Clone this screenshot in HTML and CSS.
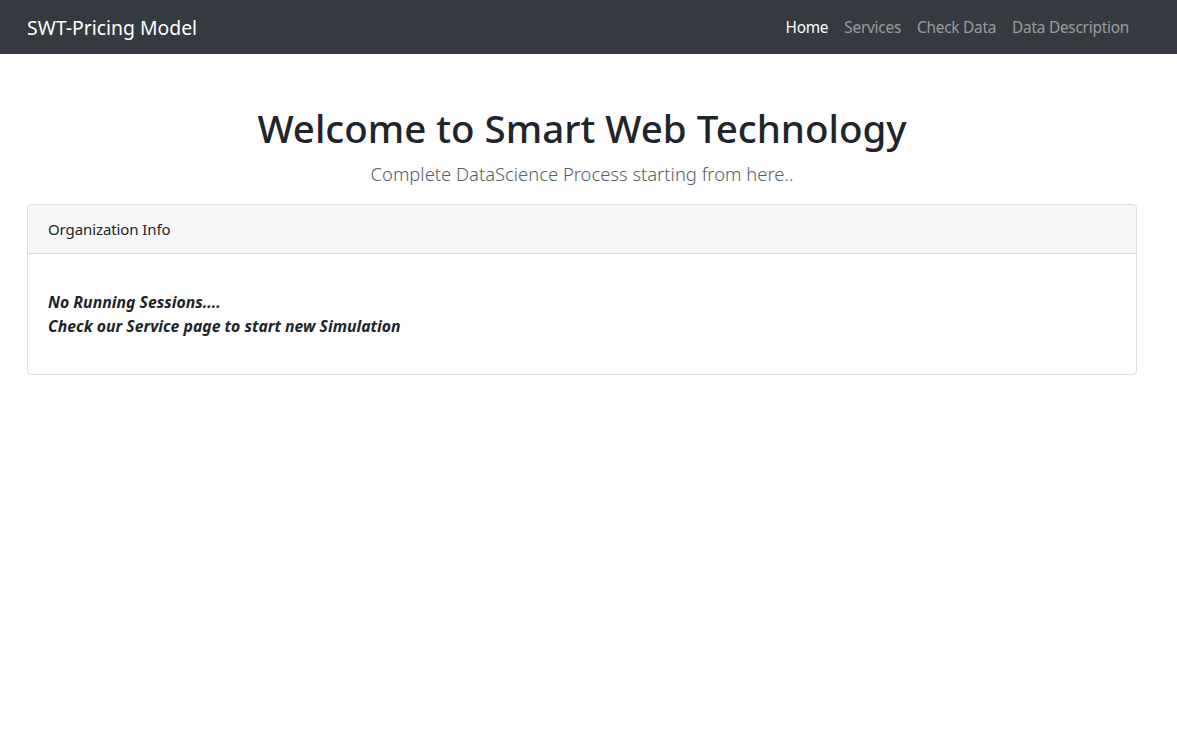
FILE: index.html
```html
<!DOCTYPE html>
<html lang="en">
<head>
<meta charset="utf-8">
<title>SWT-Pricing Model</title>
<link rel="stylesheet" href="styles.css">
</head>
<body>
<nav class="navbar">
  <a class="brand" href="#">SWT-Pricing Model</a>
  <ul class="nav">
    <li><a class="nav-link active" href="#">Home</a></li>
    <li><a class="nav-link" href="#">Services</a></li>
    <li><a class="nav-link" href="#">Check Data</a></li>
    <li><a class="nav-link" href="#">Data Description</a></li>
  </ul>
</nav>
<main class="content">
  <header class="hero">
    <h1 class="title">Welcome to Smart Web Technology</h1>
    <p class="lead">Complete DataScience Process starting from here..</p>
  </header>
  <section class="card">
    <div class="card-header">Organization Info</div>
    <div class="card-body">
      <p class="status">No Running Sessions....<br>Check our Service page to start new Simulation</p>
    </div>
  </section>
</main>
</body>
</html>
```
FILE: styles.css
```css
* { box-sizing: border-box; }
html, body { margin: 0; padding: 0; }
body {
  font-family: "Noto Sans", "Open Sans", "Liberation Sans", sans-serif;
  font-size: 16px;
  line-height: 1.5;
  color: #212529;
  background: #fff;
}
.navbar {
  height: 54px;
  background: #343a40;
  display: flex;
  align-items: center;
  justify-content: space-between;
  padding: 1px 40px 0 27px;
}
.brand {
  color: #fff;
  font-size: 19.4px;
  text-decoration: none;
  line-height: 30px;
}
.nav {
  list-style: none;
  margin: 0;
  padding: 0;
  display: flex;
}
.nav-link {
  display: block;
  padding: 8px 8px;
  color: rgba(255,255,255,.5);
  text-decoration: none;
  font-size: 15.4px;
  letter-spacing: -0.25px;
  line-height: 24px;
}
.nav-link.active { color: #fff; }
.content {
  padding: 0 40px 0 27px;
}
.hero {
  text-align: center;
  padding-top: 51px;
  margin-bottom: 15px;
}
.title {
  margin: 0;
  font-size: 38.5px;
  font-weight: 500;
  line-height: 46px;
}
.lead {
  margin: 8px 0 0;
  font-size: 18.4px;
  font-weight: 300;
  line-height: 30px;
  color: #565e66;
}
.card {
  border: 1px solid rgba(0,0,0,.125);
  border-radius: 4px;
  overflow: hidden;
}
.card-header {
  background: rgba(0,0,0,.03);
  border-bottom: 1px solid rgba(0,0,0,.125);
  padding: 12px 20px;
  line-height: 24px;
  font-size: 15px;
  letter-spacing: -0.1px;
}
.card-body {
  padding: 36px 20px 36px;
}
.status {
  margin: 0;
  font-weight: 700;
  font-style: italic;
  line-height: 24px;
  font-size: 15.8px;
}
```
